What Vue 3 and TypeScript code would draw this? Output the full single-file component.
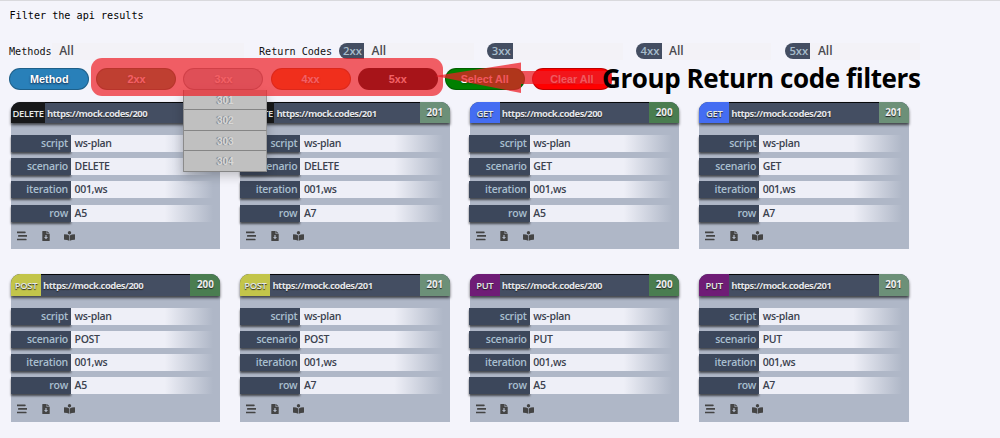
<script setup lang="ts">
interface CodeFilter { code: string; value: string }
interface Result { method: string; status: number; row: string }

const codeFilters: CodeFilter[] = [
  { code: '2xx', value: 'All' },
  { code: '3xx', value: '' },
  { code: '4xx', value: 'All' },
  { code: '5xx', value: 'All' },
]
const redirects = ['301', '302', '303', '304']
const buttons = [
  { label: 'Method', kind: 'method' },
  { label: '2xx', kind: 'ok' },
  { label: '3xx', kind: 'redirect' },
  { label: '4xx', kind: 'client' },
  { label: '5xx', kind: 'server' },
  { label: 'Select All', kind: 'select' },
  { label: 'Clear All', kind: 'clear' },
]
const results: Result[] = ['DELETE', 'GET', 'POST', 'PUT'].flatMap((method) => [
  { method, status: 200, row: 'A5' },
  { method, status: 201, row: 'A7' },
])
const fields = (r: Result) => [
  { name: 'script', value: 'ws-plan' },
  { name: 'scenario', value: r.method },
  { name: 'iteration', value: '001,ws' },
  { name: 'row', value: r.row },
]
</script>

<template>
  <main class="page">
    <h1 class="title">Filter the api results</h1>
    <section class="filters">
      <div class="methods"><span class="mono">Methods</span><span class="field">All</span></div>
      <span class="mono codes-label">Return Codes</span>
      <div v-for="f in codeFilters" :key="f.code" class="code">
        <span class="badge">{{ f.code }}</span><span class="field">{{ f.value }}</span>
      </div>
    </section>
    <nav class="buttons">
      <div v-for="b in buttons" :key="b.kind" class="slot">
        <button :class="['btn', b.kind]">{{ b.label }}</button>
        <ul v-if="b.kind === 'redirect'" class="menu">
          <li v-for="c in redirects" :key="c">{{ c }}</li>
        </ul>
      </div>
    </nav>
    <section class="cards">
      <article v-for="r in results" :key="r.method + r.status" class="card">
        <header class="head">
          <span :class="['verb', r.method.toLowerCase()]">{{ r.method }}</span>
          <span class="url">https://mock.codes/{{ r.status }}</span>
          <span :class="['status', 's' + r.status]">{{ r.status }}</span>
        </header>
        <dl class="rows">
          <div v-for="f in fields(r)" :key="f.name" class="row">
            <dt>{{ f.name }}</dt>
            <dd>{{ f.value }}</dd>
          </div>
        </dl>
        <footer class="icons">
          <svg width="10" height="10" viewBox="0 0 10 10"><path d="M.2 1.3H7.9M1.8 4.9H9.8M.2 8.5H8.8" stroke="#444" stroke-width="1.7" stroke-linecap="round" /></svg>
          <svg width="8" height="10" viewBox="0 0 8 10"><path fill="#444" fill-rule="evenodd" d="M.7 0H4.6V2.9H7.7V9.4Q7.7 10 7.1 10H.9Q.3 10 .3 9.4V.6Q.3 0 .7 0ZM3.4 4V5.9H2L4 8.3 6 5.9H4.6V4Z M5.2 0L7.7 2.4H5.2Z" /></svg>
          <svg width="11" height="10" viewBox="0 0 11 10"><circle cx="5.5" cy="1.7" r="1.7" fill="#444" /><path fill="#444" d="M.4 3.3Q3.5 3.3 5.2 4.6V9.8Q3.3 8.8.4 8.7Q0 8.6 0 8.2V3.8Q0 3.3.4 3.3ZM10.6 3.3Q7.5 3.3 5.8 4.6V9.8Q7.7 8.8 10.6 8.7Q11 8.6 11 8.2V3.8Q11 3.3 10.6 3.3Z" /></svg>
        </footer>
      </article>
    </section>
    <div class="callout-box"></div>
    <svg class="callout-arrow" width="180" height="32" viewBox="0 0 180 32"><path d="M0 14L86 .5V9H177V22H86V31Z" fill="#ee1c24" fill-opacity=".74" /></svg>
    <p class="callout-text">Group Return code filters</p>
  </main>
</template>

<style>
body { margin: 0; background: #f4f4fb; overflow: hidden; }
</style>

<style scoped>
* { box-sizing: border-box; }
.page { position: relative; width: 1000px; height: 438px; overflow: hidden; background: #f4f4fb; border-top: 1px solid #d9d9dd; font: 600 10.5px 'Open Sans', sans-serif; }
.title { margin: 8px 0 0 9.5px; height: 13px; font: 400 10.15px/13px 'DejaVu Sans Mono', monospace; color: #000; }
.mono { font: 400 10.15px/18px 'DejaVu Sans Mono', monospace; color: #111; }
.filters { display: flex; margin: 20.5px 0 0 9px; height: 17px; }
.methods { display: flex; width: 235px; margin-right: 15px; }
.codes-label { width: 79.5px; white-space: nowrap; }
.field { flex: 1; padding-left: 7.5px; font: 600 12px/16px 'Open Sans', sans-serif; color: #4a4a4f; background: #f3f2f7; }
.code { display: flex; width: 135.3px; margin-right: 13.5px; }
.badge { width: 25.5px; height: 16px; padding-left: 4.5px; border-radius: 9px 0 0 9px; background: #444e62; color: #a7bccb; font: 600 11.3px/16px 'Open Sans', sans-serif; }
.buttons { display: flex; gap: 7.1px; margin: 8px 0 0 9.3px; }
.slot { position: relative; width: 80px; height: 22px; }
.btn { display: block; width: 100%; height: 22px; padding: 0; border: 1px solid rgba(0, 0, 0, .25); border-radius: 11px; font: 700 10.8px/20px 'Liberation Sans', sans-serif; color: #fff; text-shadow: 0 1px 2px rgba(0, 0, 0, .35); white-space: nowrap; }
.method { background: #2980b9; text-shadow: 0 1px 2px #124; }
.ok { background: #509052; }
.redirect { background: #bcc5d0; }
.client { background: #f35a0a; }
.server { background: #000; }
.select { background: #008000; }
.clear { background: #f00; }
.menu { position: absolute; z-index: 3; left: 0; top: 22px; width: 83.5px; margin: 0; padding: 0; list-style: none; background: #c0c0c0; border-left: 1px solid #8b8b8b; box-shadow: 0 4px 10px rgba(0, 0, 0, .22); }
.menu li { height: 20.6px; border-bottom: 1px solid #858585; border-right: 1px solid #999; font: 700 10px/21px 'Liberation Sans', sans-serif; color: #d8d8d8; text-align: center; text-shadow: -1px 0 1px #777; }
.cards { display: grid; grid-template-columns: repeat(4, 209.4px); column-gap: 20px; row-gap: 25.2px; margin: 12px 0 0 11px; }
.card { height: 147.5px; background: #afb7c7; border-radius: 10px 10px 0 0; }
.head { display: flex; height: 21.6px; border-radius: 9px 9px 0 0; overflow: hidden; background: #444e62; box-shadow: 0 2px 3px rgba(0, 0, 0, .65); color: #eeeef0; line-height: 23px; text-shadow: 0 1px 1px #222; }
.verb { width: 30px; text-align: center; font-size: 9.4px; letter-spacing: -.3px; color: #e5e8e6; }
.delete { width: 34px; background: #171819; }
.get { background: #446df2; }
.post { background: #c3c54a; }
.put { background: #6f1c76; }
.url { flex: 1; padding-left: 2px; border-top: 1.5px solid #07080a; line-height: 21px; font-size: 9.5px; letter-spacing: -.53px; font-weight: 700; color: #e2e4e9; white-space: nowrap; }
.status { width: 30px; text-align: center; line-height: 21px; font-weight: 700; font-size: 9.8px; }
.s200 { background: #4a7d50; }
.s201 { background: #6c9078; }
.rows { display: grid; row-gap: 6.2px; margin: 12px 0 0 -.5px; }
.row { display: flex; height: 17px; line-height: 17px; }
dt { width: 60.5px; padding-right: 3px; text-align: right; background: #3c475b; color: #a9bfcf; font-weight: 600; letter-spacing: -.25px; box-shadow: 0 1.5px 2px rgba(0, 0, 0, .6); }
dd { flex: 1; margin: 0 7px 0 0; padding-left: 3.5px; color: #3b424f; font-weight: 600; letter-spacing: -.3px; background: linear-gradient(90deg, #eeeff7 0, #eeeff7 66%, #afb7c7 100%); }
.icons { display: flex; align-items: center; gap: 14.5px; margin: 9.8px 0 0 6px; height: 10px; }
.callout-box { position: absolute; z-index: 5; left: 91px; top: 56.5px; width: 352px; height: 38.5px; border-radius: 11px; background: rgba(238, 28, 36, .7); }
.callout-arrow { position: absolute; z-index: 6; left: 435px; top: 61px; }
.callout-text { position: absolute; z-index: 7; left: 602px; top: 59px; margin: 0; font: 700 26px/36px 'Open Sans', sans-serif; letter-spacing: -.42px; color: #000; white-space: nowrap; }
</style>
